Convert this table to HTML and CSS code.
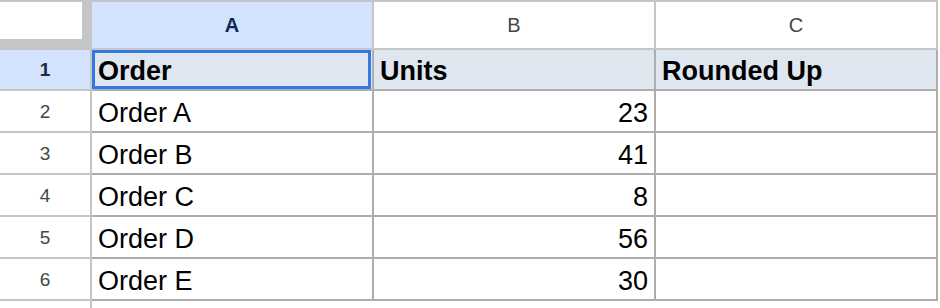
FILE: index.html
```html
<!DOCTYPE html>
<html>
<head>
<meta charset="utf-8">
<link rel="stylesheet" href="styles.css">
</head>
<body>
<div class="sheet">
  <div class="corner"><div class="corner-box"></div></div>
  <div class="colhead sel">A</div>
  <div class="colhead">B</div>
  <div class="colhead">C</div>

  <div class="rowhead sel">1</div>
  <div class="cell hdr active">Order</div>
  <div class="cell hdr">Units</div>
  <div class="cell hdr">Rounded Up</div>

  <div class="rowhead">2</div>
  <div class="cell">Order A</div>
  <div class="cell num">23</div>
  <div class="cell"></div>

  <div class="rowhead">3</div>
  <div class="cell">Order B</div>
  <div class="cell num">41</div>
  <div class="cell"></div>

  <div class="rowhead">4</div>
  <div class="cell">Order C</div>
  <div class="cell num">8</div>
  <div class="cell"></div>

  <div class="rowhead">5</div>
  <div class="cell">Order D</div>
  <div class="cell num">56</div>
  <div class="cell"></div>

  <div class="rowhead">6</div>
  <div class="cell">Order E</div>
  <div class="cell num">30</div>
  <div class="cell"></div>

  <div class="rowhead filler"></div>
</div>
</body>
</html>
```

FILE: styles.css
```css
* { box-sizing: border-box; }
html, body {
  margin: 0;
  padding: 0;
  background: #ffffff;
  width: 940px;
  height: 308px;
  overflow: hidden;
}
.sheet {
  display: grid;
  grid-template-columns: 92px 282px 282px 282px;
  grid-template-rows: 48px 41px 42px 42px 42px 42px 42px 20px;
  border-top: 2px solid #c4c7c5;
  width: 938px;
  font-family: "Liberation Sans", Arial, sans-serif;
  color: #000;
}
.corner {
  background: #c4c7c5;
  display: flex;
  align-items: flex-start;
  justify-content: flex-start;
}
.corner-box {
  width: 82px;
  height: 37px;
  background: #ffffff;
}
.colhead {
  display: flex;
  align-items: center;
  justify-content: center;
  font-size: 20px;
  color: #444746;
  background: #ffffff;
  border-right: 2px solid #c4c7c5;
  border-bottom: 2px solid #c4c7c5;
  padding-top: 1px;
}
.colhead.sel {
  background: #d3e3fd;
  color: #0b2a5a;
  font-weight: bold;
}
.rowhead {
  display: flex;
  align-items: center;
  justify-content: center;
  font-size: 19px;
  color: #444746;
  background: #ffffff;
  border-right: 2px solid #c4c7c5;
  border-bottom: 2px solid #c4c7c5;
  padding-top: 1px;
}
.rowhead.sel {
  background: #d3e3fd;
  color: #1f2a3a;
  font-weight: bold;
}
.rowhead.filler {
  border-bottom: none;
}
.cell {
  display: flex;
  align-items: flex-end;
  padding: 0 6px 2px 6px;
  font-size: 27px;
  line-height: 31px;
  white-space: nowrap;
  border-right: 2px solid #adadad;
  border-bottom: 2px solid #adadad;
  background: #ffffff;
}
.cell.hdr {
  background: #dee6ef;
  font-weight: bold;
}
.cell.num {
  justify-content: flex-end;
}
.cell.active {
  position: relative;
}
.cell.active::after {
  content: "";
  position: absolute;
  left: 0;
  top: 0;
  right: 1px;
  bottom: 0;
  border: 3px solid #3578e5;
}
```
